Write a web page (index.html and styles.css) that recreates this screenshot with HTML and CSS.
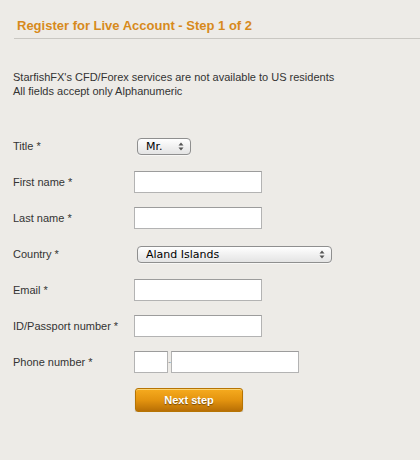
FILE: index.html
```html
<!DOCTYPE html>
<html lang="en">
<head>
    <meta charset="UTF-8">
    <title>Register for Live Account</title>
    <link rel="stylesheet" href="styles.css">
</head>
<body>

    <div class="header">
        <h1>Register for Live Account - Step 1 of 2</h1>
    </div>

    <div class="notice">
        <p>StarfishFX's CFD/Forex services are not available to US residents</p>
        <p>All fields accept only Alphanumeric</p>
    </div>

    <form class="register">
        <div class="row">
            <label class="label">Title *</label>
            <span class="select-wrap title-select">
                <select><option>Mr.</option><option>Mrs.</option><option>Ms.</option></select>
                <svg class="arrows" width="6" height="9" viewBox="0 0 6 9"><path d="M3 0.5 L5.5 3.5 H0.5 Z M3 8.5 L5.5 5.5 H0.5 Z" fill="#555"/></svg>
            </span>
        </div>
        <div class="row">
            <label class="label">First name *</label>
            <input type="text" class="field">
        </div>
        <div class="row">
            <label class="label">Last name *</label>
            <input type="text" class="field">
        </div>
        <div class="row">
            <label class="label">Country *</label>
            <span class="select-wrap country-select">
                <select><option>Aland Islands</option><option>Albania</option></select>
                <svg class="arrows" width="6" height="9" viewBox="0 0 6 9"><path d="M3 0.5 L5.5 3.5 H0.5 Z M3 8.5 L5.5 5.5 H0.5 Z" fill="#555"/></svg>
            </span>
        </div>
        <div class="row">
            <label class="label">Email *</label>
            <input type="text" class="field">
        </div>
        <div class="row">
            <label class="label">ID/Passport number *</label>
            <input type="text" class="field">
        </div>
        <div class="row">
            <label class="label">Phone number *</label>
            <input type="text" class="field prefix">
            <span class="dash">-</span>
            <input type="text" class="field">
        </div>
        <button type="button" class="next">Next step</button>
    </form>

</body>
</html>
```

FILE: styles.css
```css
body {
    margin: 0;
    background-color: #edebe7;
    font-family: "Liberation Sans", Arial, sans-serif;
    font-size: 11px;
    color: #333;
}

.header {
    margin-left: 14px;
    padding: 18px 0 5px 3px;
    border-bottom: 1px solid #c9c7c2;
}

h1 {
    margin: 0;
    font-size: 13px;
    line-height: 15px;
    font-weight: bold;
    color: #d78a1c;
}

.notice {
    margin: 31px 0 0 13px;
    line-height: 14px;
}

.notice p {
    margin: 0;
}

.register {
    margin: 30px 0 0 13px;
}

.row {
    display: flex;
    align-items: center;
    height: 36px;
}

.label {
    width: 121px;
    flex-shrink: 0;
}

.field {
    box-sizing: border-box;
    width: 128px;
    height: 22px;
    margin: 0;
    padding: 2px 4px;
    border: 1px solid #b3b3b3;
    border-top-color: #9c9c9c;
    background: #fff;
    font: 11px "Liberation Sans", Arial, sans-serif;
}

.field.prefix {
    width: 34px;
}

.dash {
    width: 3px;
    color: #8a9aa8;
    font-size: 9px;
    line-height: 22px;
    overflow: hidden;
}

/* mac style popup selects */
.select-wrap {
    position: relative;
    display: inline-block;
    margin-left: 3px;
}

.select-wrap select {
    -webkit-appearance: none;
    appearance: none;
    box-sizing: border-box;
    height: 17px;
    margin: 0;
    padding: 0 0 0 8px;
    border: 1px solid #8f8f8f;
    border-radius: 4px;
    background: linear-gradient(#ffffff, #f1f1f1 50%, #e4e4e4);
    box-shadow: 0 1px 0 rgba(255, 255, 255, 0.6);
    font: 11px "DejaVu Sans", "Lucida Grande", sans-serif;
    color: #000;
    line-height: 15px;
}

.title-select select {
    width: 54px;
}

.country-select select {
    width: 195px;
}

.arrows {
    position: absolute;
    right: 7px;
    top: 4px;
    pointer-events: none;
}

.next {
    display: block;
    box-sizing: border-box;
    width: 108px;
    height: 24px;
    margin: 8px 0 0 122px;
    padding: 0;
    border: 1px solid #b67404;
    border-radius: 3px;
    background: linear-gradient(#f6ab1f, #e4940f 50%, #b86f05);
    box-shadow: 0 1px 1px rgba(0, 0, 0, 0.25), inset 0 1px 0 rgba(255, 230, 150, 0.7);
    color: #fff;
    font: bold 11px "Liberation Sans", Arial, sans-serif;
    text-shadow: 0 1px 1px rgba(0, 0, 0, 0.45);
    cursor: pointer;
}
```
